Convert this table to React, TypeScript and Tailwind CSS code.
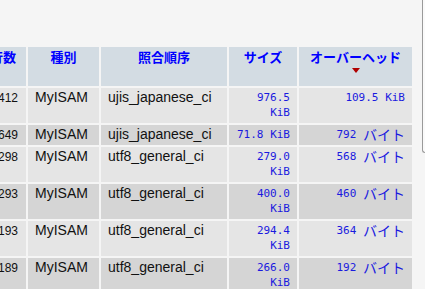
import React from 'react';

// テーブル一覧（phpMyAdmin 風）の一部分
const rows = [
  { count: '412', engine: 'MyISAM', coll: 'ujis_japanese_ci', size: ['976.5', 'KiB'], over: ['109.5', 'KiB'] },
  { count: '649', engine: 'MyISAM', coll: 'ujis_japanese_ci', size: ['71.8', 'KiB'], over: ['792', 'バイト'] },
  { count: '298', engine: 'MyISAM', coll: 'utf8_general_ci', size: ['279.0', 'KiB'], over: ['568', 'バイト'] },
  { count: '293', engine: 'MyISAM', coll: 'utf8_general_ci', size: ['400.0', 'KiB'], over: ['460', 'バイト'] },
  { count: '193', engine: 'MyISAM', coll: 'utf8_general_ci', size: ['294.4', 'KiB'], over: ['364', 'バイト'] },
  { count: '189', engine: 'MyISAM', coll: 'utf8_general_ci', size: ['266.0', 'KiB'], over: ['192', 'バイト'] },
];

const th =
  "align-top pt-[1px] text-center text-[13px] leading-[17px] font-bold text-[#0000ff] bg-[#d3dce3] font-['Noto_Sans_CJK_JP',sans-serif]";
const mono = "font-['DejaVu_Sans_Mono','Noto_Sans_CJK_JP',monospace] text-[11px] leading-[15px] text-[#1a1adf]";

function Unit({ u }: { u: string }) {
  if (u === 'KiB') return <>{u}</>;
  return <span className="align-top text-[14px] leading-[15px] font-['Noto_Sans_CJK_JP',sans-serif]">{u}</span>;
}

export default function App() {
  return (
    <div className="relative w-[425px] h-[289px] overflow-hidden bg-[#f5f5f5] pt-[45px] font-['Liberation_Sans',Arial,sans-serif]">
      <table className="ml-[-22px] table-fixed border-separate border-spacing-[2px]">
        <colgroup>
          <col className="w-[46px]" />
          <col className="w-[71px]" />
          <col className="w-[126px]" />
          <col className="w-[68px]" />
          <col className="w-[113px]" />
        </colgroup>
        <thead>
          <tr className="h-[39px]">
            <th className={th}>行数</th>
            <th className={th}>種別</th>
            <th className={th}>照合順序</th>
            <th className={th}>サイズ</th>
            <th className={th}>
              <div>オーバーヘッド</div>
              <div className="mx-auto mt-[3px] h-0 w-0 border-x-[4px] border-t-[5px] border-x-transparent border-t-[#b00000]" />
            </th>
          </tr>
        </thead>
        <tbody>
          {rows.map((r, i) => {
            const bg = i % 2 === 0 ? 'bg-[#e5e5e5]' : 'bg-[#d5d5d5]';
            return (
              <tr key={i} className="align-top">
                <td className={`${bg} pt-[2px] pr-[8px] text-right text-[12px] leading-[16px] text-[#111]`}>
                  {r.count}
                </td>
                <td className={`${bg} pt-[1px] px-[7px] text-[14px] leading-[17px] text-[#111]`}>{r.engine}</td>
                <td className={`${bg} pt-[1px] px-[7px] text-[14px] leading-[17px] text-[#111]`}>{r.coll}</td>
                <td className={`${bg} pt-[2px] pb-[3px] pl-[4px] pr-[7px] text-right ${mono}`}>
                  {r.size[0]} {r.size[1]}
                </td>
                <td className={`${bg} pt-[2px] pb-[3px] pl-[4px] pr-[7px] text-right ${mono}`}>
                  {r.over[0]} <Unit u={r.over[1]} />
                </td>
              </tr>
            );
          })}
        </tbody>
      </table>
      <div className="absolute right-0 top-0 h-[153px] w-[3px] rounded-bl-[4px] border-b border-l border-[#9a9a9a] bg-[#fafafa]" />
    </div>
  );
}
